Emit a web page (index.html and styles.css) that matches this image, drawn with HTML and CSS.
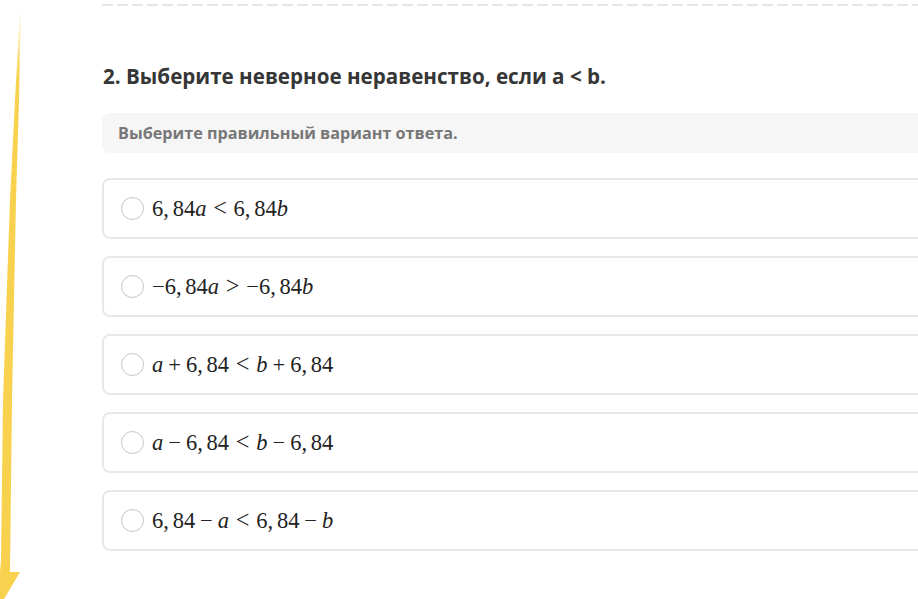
FILE: index.html
```html
<!DOCTYPE html>
<html>
  <head>
    <title>Задание 2</title>
    <link rel="stylesheet" href="styles.css">
  </head>
  <body>
    <svg class="arrow" width="24" height="599" viewBox="0 0 24 599">
      <defs>
        <linearGradient id="fade" x1="0" y1="0" x2="0" y2="1">
          <stop offset="0" stop-color="#f8d24e" stop-opacity="0" />
          <stop offset="0.12" stop-color="#f8d24e" stop-opacity="1" />
          <stop offset="1" stop-color="#f8d24e" />
        </linearGradient>
      </defs>
      <polygon fill="url(#fade)" points="21,8 19,100 16,200 12,400 10,572 20,572 4,599 0,599 0,572 1,560 3,400 10,200 15,100 20,8" />
    </svg>

    <div class="page">
      <div class="divider"></div>

      <h2 class="question">2. Выберите неверное неравенство, если a &lt; b.</h2>

      <div class="hint">Выберите правильный вариант ответа.</div>

      <div class="options">
        <label class="option">
          <span class="radio"></span>
          <span class="math">6<span class="p">,</span>84<i>a</i><span class="rel">&lt;</span>6<span class="p">,</span>84<i>b</i></span>
        </label>
        <label class="option">
          <span class="radio"></span>
          <span class="math">−6<span class="p">,</span>84<i>a</i><span class="rel">&gt;</span>−6<span class="p">,</span>84<i>b</i></span>
        </label>
        <label class="option">
          <span class="radio"></span>
          <span class="math"><i>a</i><span class="bin">+</span>6<span class="p">,</span>84<span class="rel">&lt;</span><i>b</i><span class="bin">+</span>6<span class="p">,</span>84</span>
        </label>
        <label class="option">
          <span class="radio"></span>
          <span class="math"><i>a</i><span class="bin">−</span>6<span class="p">,</span>84<span class="rel">&lt;</span><i>b</i><span class="bin">−</span>6<span class="p">,</span>84</span>
        </label>
        <label class="option">
          <span class="radio"></span>
          <span class="math">6<span class="p">,</span>84<span class="bin">−</span><i>a</i><span class="rel">&lt;</span>6<span class="p">,</span>84<span class="bin">−</span><i>b</i></span>
        </label>
      </div>
    </div>
  </body>
</html>
```

FILE: styles.css
```css
body {
  margin: 0;
  padding: 0;
  background: #fff;
  font-family: "Open Sans", Arial, sans-serif;
  overflow: hidden;
  height: 599px;
}

.arrow {
  position: absolute;
  left: 0;
  top: 0;
}

.page {
  padding-left: 102px;
  width: 860px;
}

.divider {
  margin-top: 4px;
  height: 2px;
  background: repeating-linear-gradient(90deg, #e6e6e6 0 11px, transparent 11px 15px);
}

.question {
  margin: 56px 0 0 1px;
  font-size: 20.6px;
  font-weight: 700;
  color: #363636;
  line-height: 28px;
}

.hint {
  margin-top: 23px;
  height: 40px;
  background: #f6f6f6;
  border-radius: 8px;
  padding-left: 16px;
  display: flex;
  align-items: center;
  font-size: 16.2px;
  font-weight: 700;
  color: #777;
}

.options {
  margin-top: 25px;
  display: flex;
  flex-direction: column;
  gap: 17px;
}

.option {
  height: 57px;
  border: 2px solid #e8e8e8;
  border-radius: 8px;
  display: flex;
  align-items: center;
  padding-left: 17px;
  gap: 8px;
}

.radio {
  width: 23px;
  height: 23px;
  border: 1px solid #c4c4c4;
  border-radius: 50%;
  box-sizing: border-box;
}

.math {
  font-family: "Liberation Serif", "DejaVu Serif", serif;
  font-size: 22.5px;
  color: #222;
}

.math i {
  font-style: italic;
}

.math .p {
  margin-right: 0.1667em;
}

.math .rel {
  margin: 0 0.2778em;
  font-size: 1.08em;
  line-height: 1;
}

.math .bin {
  margin: 0 0.2222em;
}
```
